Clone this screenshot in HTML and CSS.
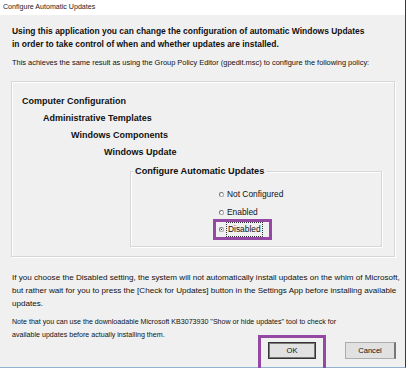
FILE: index.html
```html
<!DOCTYPE html>
<html lang="en">
<head>
  <meta charset="UTF-8" />
  <title>Configure Automatic Updates</title>
  <link rel="stylesheet" href="styles.css">
</head>
<body>

  <div class="window">
    <div class="titlebar">Configure Automatic Updates</div>

    <div class="content">
      <h1 class="lead">Using this application you can change the configuration of automatic Windows Updates<br>in order to take control of when and whether updates are installed.</h1>

      <p class="intro">This achieves the same result as using the Group Policy Editor (gpedit.msc) to configure the following policy:</p>

      <!-- Policy path -->
      <div class="group policy">
        <div class="path lvl1">Computer Configuration</div>
        <div class="path lvl2">Administrative Templates</div>
        <div class="path lvl3">Windows Components</div>
        <div class="path lvl4">Windows Update</div>

        <div class="group setting">
          <div class="legend">Configure Automatic Updates</div>
          <div class="radios">
            <label class="radio"><span class="dot"></span>Not Configured</label>
            <label class="radio"><span class="dot"></span>Enabled</label>
            <label class="radio checked"><span class="dot"></span><span class="focus">Disabled</span></label>
          </div>
        </div>
      </div>

      <p class="text first">If you choose the Disabled setting, the system will not automatically install updates on the whim of Microsoft,<br>but rather wait for you to press the [Check for Updates] button in the Settings App before installing available<br>updates.</p>

      <p class="text second">Note that you can use the downloadable Microsoft KB3073930 "Show or hide updates" tool to check for<br>available updates before actually installing them.</p>

      <div class="actions">
        <div class="mark">
          <button class="btn">OK</button>
        </div>
        <button class="btn cancel">Cancel</button>
      </div>
    </div>
  </div>

</body>
</html>
```

FILE: styles.css
```css
* {
  box-sizing: border-box;
  margin: 0;
  padding: 0;
}

html, body {
  background: #fff;
  font-family: 'Liberation Sans', Arial, sans-serif;
  color: #111;
}

.window {
  width: 406px;
  height: 368px;
  background: #f0f0f0;
  border-right: 1px solid #243f5c;
  border-bottom: 1px solid #8fb2d0;
  display: flex;
  flex-direction: column;
}

.titlebar {
  background: #fff;
  height: 15px;
  font-size: 7.1px;
  line-height: 15px;
  padding-left: 3px;
  color: #222;
}

.content {
  padding: 10px 0 0 12px;
  white-space: nowrap;
}

.lead {
  font-size: 8.45px;
  font-weight: bold;
  line-height: 13px;
}

.intro {
  font-size: 7.45px;
  line-height: 13px;
  margin-top: 5px;
}

.group {
  border: 1px solid #d6d6d6;
  box-shadow: inset 1px 1px 0 #fff, 1px 1px 0 #fff;
}

.policy {
  width: 384px;
  height: 176px;
  margin-top: 12px;
  padding-top: 11px;
  margin-left: -1px;
}

.path {
  font-size: 9px;
  font-weight: bold;
  line-height: 17px;
}

.lvl1 { padding-left: 10px; }
.lvl2 { padding-left: 31px; }
.lvl3 { padding-left: 59px; }
.lvl4 { padding-left: 92px; }

.setting {
  position: relative;
  width: 252px;
  height: 76px;
  margin: 10px 0 0 118px;
}

.legend {
  position: absolute;
  top: -7px;
  left: 2px;
  padding: 0 2px;
  background: #f0f0f0;
  font-size: 9.2px;
  font-weight: bold;
  line-height: 13px;
}

.radios {
  display: flex;
  flex-direction: column;
  gap: 4.5px;
  padding: 16px 0 0 88px;
}

.radio {
  display: flex;
  align-items: center;
  font-size: 8.4px;
  line-height: 13px;
}

.dot {
  width: 5px;
  height: 5px;
  border-radius: 50%;
  border: 1px solid #a8a8a8;
  border-top-color: #777;
  border-left-color: #777;
  background: #fff;
  margin-right: 3px;
  position: relative;
}

.checked .dot::after {
  content: "";
  position: absolute;
  top: 1px;
  left: 1px;
  width: 1px;
  height: 1px;
  background: #222;
}

.focus {
  outline: 1px dotted #333;
  outline-offset: 0;
  padding: 0 1px;
  position: relative;
}

.focus::before {
  content: "";
  position: absolute;
  top: -4px;
  left: -14px;
  right: -10px;
  bottom: -4px;
  border: 3px solid #9447a3;
}

.text {
  line-height: 13px;
}

.first {
  font-size: 8.1px;
  margin-top: 14px;
}

.second {
  font-size: 7.1px;
  margin-top: 6px;
}

.actions {
  display: flex;
  justify-content: flex-end;
  align-items: flex-start;
  gap: 19px;
  margin-top: -7px;
  padding-right: 9px;
}

.mark {
  height: 37px;
  border: 3px solid #9447a3;
  border-bottom: none;
  padding: 4px 7px 0 7px;
}

.btn {
  display: block;
  width: 48px;
  height: 17px;
  background: #e1e1e1;
  border: 1px solid #adadad;
  font-family: inherit;
  font-size: 7.6px;
  color: #111;
}

.mark .btn {
  border: 1px solid #333;
  box-shadow: inset 0 0 0 1px #7a7a7a;
}

.cancel {
  width: 51px;
  margin-top: 7px;
  border-right: 2px solid #777;
}
```
